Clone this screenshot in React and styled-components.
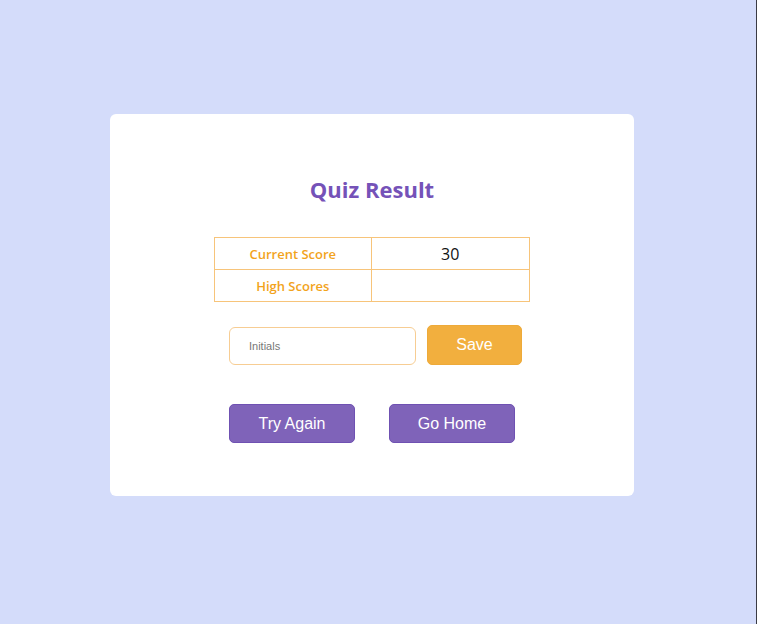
import React from 'react';
import styled, { createGlobalStyle } from 'styled-components';

const GlobalStyle = createGlobalStyle`
  body {
    margin: 0;
    font-family: 'Open Sans', sans-serif;
    background: #d4dcfa;
  }
`;

function App() {
  return (
    <>
      <GlobalStyle />
      <Page>
        <Card>
          <Title>Quiz Result</Title>
          <ScoreTable>
            <tbody>
              <tr>
                <Label>Current Score</Label>
                <Value>30</Value>
              </tr>
              <tr>
                <Label>High Scores</Label>
                <Value></Value>
              </tr>
            </tbody>
          </ScoreTable>
          <SaveRow>
            <Input placeholder='Initials' />
            <SaveButton>Save</SaveButton>
          </SaveRow>
          <ActionRow>
            <ActionButton>Try Again</ActionButton>
            <ActionButton>Go Home</ActionButton>
          </ActionRow>
        </Card>
      </Page>
    </>
  );
}

const Page = styled.div`
  min-height: 624px;
  box-sizing: border-box;
  padding: 114px 0 0 110px;
  border-right: 1px solid #3a3b44;
`;

const Card = styled.div`
  width: 524px;
  height: 382px;
  box-sizing: border-box;
  background: #fff;
  border-radius: 6px;
  padding-top: 60px;
  display: flex;
  flex-direction: column;
  align-items: center;
`;

const Title = styled.h1`
  margin: 0;
  font-size: 22px;
  line-height: 30px;
  font-weight: 700;
  color: #7552b8;
`;

const ScoreTable = styled.table`
  margin-top: 33px;
  margin-left: -1px;
  width: 316px;
  border-collapse: collapse;
  border: 1px solid #f7c47a;
`;

const Label = styled.td`
  width: 50%;
  height: 31px;
  padding: 0;
  border: 1px solid #f7c47a;
  text-align: center;
  font-size: 13px;
  font-weight: 600;
  color: #f2a31c;
`;

const Value = styled.td`
  padding: 0;
  border: 1px solid #f7c47a;
  text-align: center;
  font-size: 16px;
  color: #111;
`;

const SaveRow = styled.div`
  margin-top: 23px;
  margin-left: 7px;
  display: flex;
  align-items: flex-end;
  gap: 11px;
`;

const Input = styled.input`
  width: 187px;
  height: 38px;
  box-sizing: border-box;
  border: 1px solid #f7cd93;
  border-radius: 6px;
  padding: 0 19px;
  font-family: 'Liberation Sans', Arial, sans-serif;
  font-size: 11px;
  outline: none;
  &::placeholder {
    color: #777;
  }
`;

const SaveButton = styled.button`
  width: 95px;
  height: 40px;
  border: 1px solid #eeaa39;
  border-radius: 5px;
  background: #f2af3e;
  color: #fff;
  font-family: 'Liberation Sans', Arial, sans-serif;
  font-size: 16px;
`;

const ActionRow = styled.div`
  margin-top: 39px;
  display: flex;
  gap: 34px;
`;

const ActionButton = styled.button`
  width: 126px;
  height: 39px;
  border: 1px solid #6f51b2;
  border-radius: 5px;
  background: #7f63b9;
  color: #fff;
  font-family: 'Liberation Sans', Arial, sans-serif;
  font-size: 16px;
`;

export default App;
